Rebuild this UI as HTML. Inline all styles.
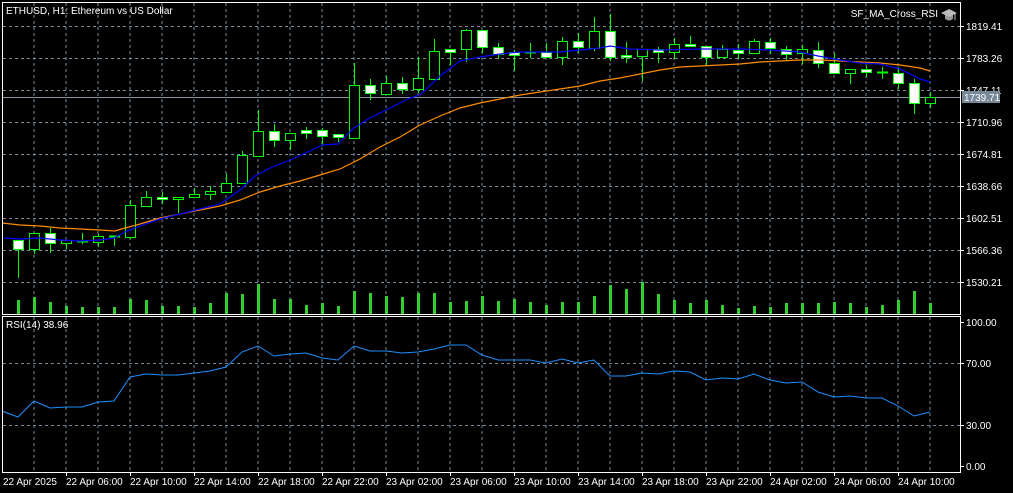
<!DOCTYPE html>
<html><head><meta charset="utf-8"><style>
html,body{margin:0;padding:0;background:#000;}
svg{display:block;}
text{font-family:"Liberation Sans",sans-serif;font-size:10px;fill:#fff;}
</style></head><body>
<svg width="1013" height="493" viewBox="0 0 1013 493" xmlns="http://www.w3.org/2000/svg" shape-rendering="crispEdges">
<rect width="1013" height="493" fill="#000"/>
<g id="grid" stroke="#778899" stroke-width="1" stroke-dasharray="3,3">
<path d="M34 3V314M66 3V314M98 3V314M130 3V314M162 3V314M194 3V314M226 3V314M258 3V314M290 3V314M322 3V314M354 3V314M386 3V314M418 3V314M450 3V314M482 3V314M514 3V314M546 3V314M578 3V314M610 3V314M642 3V314M674 3V314M706 3V314M738 3V314M770 3V314M802 3V314M834 3V314M866 3V314M898 3V314M930 3V314"/>
<path d="M34 317V472M66 317V472M98 317V472M130 317V472M162 317V472M194 317V472M226 317V472M258 317V472M290 317V472M322 317V472M354 317V472M386 317V472M418 317V472M450 317V472M482 317V472M514 317V472M546 317V472M578 317V472M610 317V472M642 317V472M674 317V472M706 317V472M738 317V472M770 317V472M802 317V472M834 317V472M866 317V472M898 317V472M930 317V472"/>
<path d="M3 26.5H960M3 58.5H960M3 90.5H960M3 122.5H960M3 154.5H960M3 186.5H960M3 218.5H960M3 250.5H960M3 282.5H960"/>
<path d="M3 363.5H960M3 425.5H960"/>
</g>
<line x1="3" y1="97.5" x2="960" y2="97.5" stroke="#8a949e"/>
<g fill="#32cd32" id="vol"></g>
<g id="cnd"></g>
<polyline fill="none" stroke="#ff8c00" stroke-width="1.2" shape-rendering="auto" points="2,223 20,225 40,226 60,228 80,229 100,230 115,231 125,228 140,224 160,218 180,214 200,210 220,206 240,200 260,192 280,186 300,181 320,175 340,169 360,159 380,147 400,137 420,125 440,116 460,108 480,103 500,99 520,95 540,92 560,89 580,86 600,81 620,78 640,74 660,70 680,67 700,66 720,65 740,64 760,62 780,61 800,60 820,60 840,61 860,62 880,63 900,65 920,68 930,71"/>
<polyline fill="none" stroke="#0000ff" stroke-width="1.2" shape-rendering="auto" points="4,238 20,239 40,238 60,240 80,241 100,240 114,238 125,232 140,226 160,219 180,214 200,209 220,204 240,190 255,176 270,168 290,160 310,151 322,145 338,144 354,128 370,118 390,108 410,98 420,95 440,76 460,61 480,57 500,54 520,52 560,52 590,49 600,48 610,46 630,49 660,50 700,49 740,49 770,50 800,52 818,56 840,60 860,63 880,64 900,69 920,79 930,82"/>
<polyline fill="none" stroke="#1e90ff" stroke-width="1" shape-rendering="auto" points="2,411 18,417 34,401 50,408 66,407 82,407 98,402 114,401 130,377 146,374 162,375 178,375 194,373 210,371 226,367 242,352 258,346 274,356 290,354 306,353 322,358 338,360 354,346 370,351 386,351 402,353 418,352 434,349 450,345 466,345 482,355 498,360 514,360 530,360 546,363 562,359 578,363 594,360 610,376 626,376 642,373 658,374 674,371 690,372 706,380 722,378 738,379 754,374 770,380 786,383 802,382 818,392 834,397 850,396 866,398 882,398 898,406 914,416 930,412"/>
<g stroke="#fff" fill="none">
<path d="M2.5 2.5H960.5V314.5H2.5Z"/>
<path d="M2.5 316.5H960.5V472.5H2.5Z"/>
<path d="M960 26.5h4M960 58.5h4M960 90.5h4M960 122.5h4M960 154.5h4M960 186.5h4M960 218.5h4M960 250.5h4M960 282.5h4M960 322.5h4M960 363.5h4M960 425.5h4M960 466.5h4"/>
<path d="M66.5 472v4M130.5 472v4M194.5 472v4M258.5 472v4M322.5 472v4M386.5 472v4M450.5 472v4M514.5 472v4M578.5 472v4M642.5 472v4M706.5 472v4M770.5 472v4M834.5 472v4M898.5 472v4"/>
</g>
<text x="6" y="14">ETHUSD, H1:  Ethereum vs US Dollar</text>
<text x="938" y="17" text-anchor="end">SF_MA_Cross_RSI</text>
<g transform="translate(941,9)"><path d="M0 4L8 0L16 4L8 8Z" fill="#bbb"/><path d="M4 6V10Q8 13 12 10V6L8 8Z" fill="#999"/><path d="M14 5V11" stroke="#bbb"/></g>
<text x="6" y="328">RSI(14) 38.96</text>
<g>
<text x="966" y="30">1819.41</text>
<text x="966" y="62">1783.26</text>
<text x="966" y="94">1747.11</text>
<text x="966" y="126">1710.96</text>
<text x="966" y="158">1674.81</text>
<text x="966" y="190">1638.66</text>
<text x="966" y="222">1602.51</text>
<text x="966" y="254">1566.36</text>
<text x="966" y="286">1530.21</text>
<text x="966" y="326">100.00</text>
<text x="966" y="367">70.00</text>
<text x="966" y="429">30.00</text>
<text x="966" y="470">0.00</text>
</g>
<rect x="962" y="91" width="38" height="12" fill="#778899"/>
<text x="964" y="101">1739.71</text>
<g>
<text x="3" y="485">22 Apr 2025</text>
<text x="66" y="485">22 Apr 06:00</text>
<text x="130" y="485">22 Apr 10:00</text>
<text x="194" y="485">22 Apr 14:00</text>
<text x="258" y="485">22 Apr 18:00</text>
<text x="322" y="485">22 Apr 22:00</text>
<text x="386" y="485">23 Apr 02:00</text>
<text x="450" y="485">23 Apr 06:00</text>
<text x="514" y="485">23 Apr 10:00</text>
<text x="578" y="485">23 Apr 14:00</text>
<text x="642" y="485">23 Apr 18:00</text>
<text x="706" y="485">23 Apr 22:00</text>
<text x="770" y="485">24 Apr 02:00</text>
<text x="834" y="485">24 Apr 06:00</text>
<text x="898" y="485">24 Apr 10:00</text>
</g>
</svg>
<script>
var C=[[240,249,240,277,1],[249,233,233,253,0],[233,243,228,252,1],[243,240,240,248,0],[241,241,233,243,0],[242,236,234,246,0],[236,236,236,245,0],[237,205,200,238,0],[206,197,191,206,0],[197,199,192,203,1],[199,197,197,212,0],[197,194,188,197,0],[194,191,186,199,0],[192,183,174,192,0],[183,155,151,183,0],[156,131,110,156,0],[131,140,124,146,1],[140,133,133,149,0],[130,133,127,138,1],[130,136,128,145,1],[134,137,134,141,1],[138,85,63,138,0],[85,93,79,99,1],[94,83,76,94,0],[83,89,77,93,1],[89,78,57,92,0],[79,51,39,79,0],[49,52,49,64,1],[49,30,29,61,0],[30,47,30,52,1],[47,54,43,58,1],[52,55,50,70,1],[52,52,43,57,0],[52,57,43,57,1],[57,41,37,64,0],[41,47,33,52,1],[48,31,17,50,0],[31,57,14,60,1],[55,57,42,62,1],[56,49,49,80,0],[49,52,47,62,1],[52,44,38,58,0],[44,46,36,46,1],[46,57,46,65,1],[57,49,45,57,0],[50,53,44,58,1],[53,41,39,53,0],[42,48,38,53,1],[49,54,46,59,1],[53,49,45,63,0],[50,63,42,67,1],[63,73,53,73,1],[73,69,69,83,0],[69,72,66,76,1],[72,72,67,78,0],[73,83,67,88,1],[83,103,79,113,1],[103,97,92,107,0]];
var V=[300,297,302,306,307,307,307,299,300,306,306,307,303,293,294,284,299,299,305,303,306,291,293,296,297,293,293,302,301,296,301,299,302,305,302,302,296,285,289,282,294,300,303,300,305,308,306,307,303,303,303,302,303,307,305,300,291,303];
var ns="http://www.w3.org/2000/svg",g=document.getElementById('cnd'),vg=document.getElementById('vol');
function el(t,a,p){var e=document.createElementNS(ns,t);for(var k in a)e.setAttribute(k,a[k]);p.appendChild(e);}
C.forEach(function(c,i){var x=18+16*i;var top=Math.min(c[0],c[1]),bot=Math.max(c[0],c[1]);
el('line',{x1:x+.5,y1:c[2],x2:x+.5,y2:c[3]+1,stroke:'#00ff00'},g);
if(bot-top<1){el('line',{x1:x-5,y1:top+.5,x2:x+6,y2:top+.5,stroke:'#00ff00','stroke-width':2},g);}
else el('rect',{x:x-4.5,y:top+.5,width:10,height:bot-top,fill:c[4]?'#fff':'#000',stroke:'#00ff00'},g);
el('rect',{x:x-1,y:V[i],width:3,height:314-V[i],fill:'#32cd32'},vg);});
</script>
</body></html>
